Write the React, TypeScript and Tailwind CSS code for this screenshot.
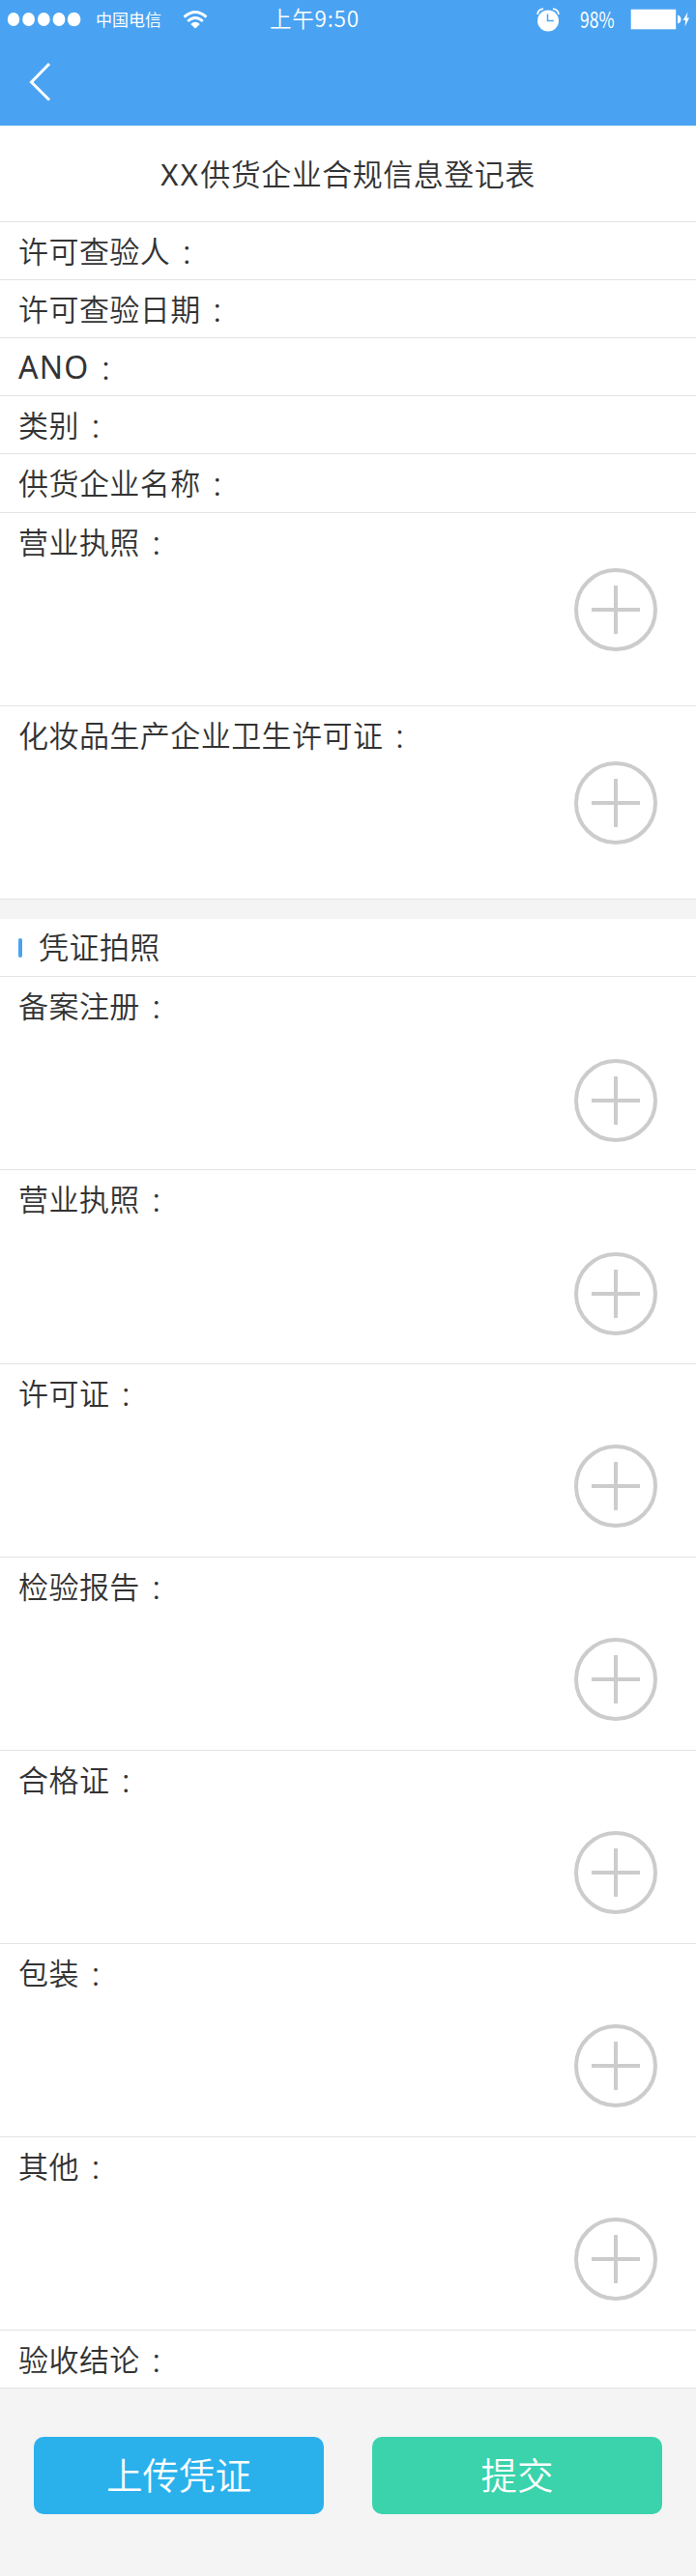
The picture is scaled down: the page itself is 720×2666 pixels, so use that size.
const CJK = "font-['Noto_Sans','Noto_Sans_CJK_SC',sans-serif]";

function Plus() {
  return (
    <svg width="86" height="86" viewBox="0 0 86 86" fill="none" stroke="#cccccc" strokeWidth="4" className="block shrink-0">
      <circle cx="43" cy="43" r="41" />
      <path d="M43 18V68M18 43H68" />
    </svg>
  );
}

function Label({ children, latin }: { children: string; latin?: boolean }) {
  return (
    <span className="flex h-[59px] items-center pt-[2px] text-[31px] font-[350] leading-[57px] tracking-[0.45px] whitespace-nowrap">
      <span className={latin ? "pb-[2px] text-[32px] font-normal leading-[55px] tracking-[1.2px]" : ""}>{children}</span>
      <span className="pt-[2px] pl-[10px] text-[28px] font-light leading-[55px] font-['Noto_Sans_CJK_SC',sans-serif]">：</span>
    </span>
  );
}

function Field({ label, tall, latin }: { label: string; tall?: boolean; latin?: boolean }) {
  return (
    <div className={tall ? "h-[61px] border-b border-[#e3e3e3] pl-[19px]" : "h-[60px] border-b border-[#e3e3e3] pl-[19px]"}>
      <Label latin={latin}>{label}</Label>
    </div>
  );
}

function Photo({ label, iconClass, tall }: { label: string; iconClass: string; tall?: boolean }) {
  return (
    <div className={`flex items-start justify-between border-b border-[#e3e3e3] pl-[19px] pr-10 ${tall ? "h-[201px]" : "h-[200px]"}`}>
      <Label>{label}</Label>
      <div className={iconClass}>
        <Plus />
      </div>
    </div>
  );
}

function StatusBar() {
  return (
    <div className="flex h-10 items-center text-white font-['Noto_Sans_CJK_SC',sans-serif]">
      <svg width="84" height="40" viewBox="0 0 84 40" fill="#fff" className="shrink-0">
        <ellipse cx="14" cy="20" rx="6.2" ry="7" />
        <ellipse cx="29.6" cy="20" rx="6.4" ry="7" />
        <ellipse cx="45.3" cy="20" rx="6.4" ry="7" />
        <ellipse cx="61" cy="20" rx="6.4" ry="7" />
        <ellipse cx="76.6" cy="20" rx="6.8" ry="7.3" />
      </svg>
      <span className="ml-[15px] w-[90px] text-[17px] leading-10 whitespace-nowrap">中国电信</span>
      <svg width="26" height="20" viewBox="0 0 26 20" fill="none" stroke="#fff" strokeWidth="2.8" className="shrink-0">
        <path d="M1.5 7.6Q13 -2.6 24.5 7.6" />
        <path d="M5.2 12Q13 5 20.8 12" />
        <path d="M8.2 15Q13 10.6 17.8 15L13 19.4Z" fill="#fff" stroke="none" />
      </svg>
      <span className="ml-[64px] w-[96px] pb-[3px] text-[22.5px] font-[350] leading-[37px] tracking-[0.8px] whitespace-nowrap">上午9:50</span>
      <svg width="24" height="26" viewBox="0 0 24 26" className="ml-auto shrink-0">
        <circle cx="12" cy="14.5" r="11" fill="#fff" />
        <path d="M1.200 8Q1.200 3 7 2.200M22.800 8Q22.800 3 17 2.200" stroke="#fff" strokeWidth="1.800" fill="none" />
        <path d="M11.500 7.500V14.500H17.800" stroke="#49a3f2" strokeWidth="1.500" fill="none" />
      </svg>
      <span className="ml-[21px] w-[52px] origin-left scale-x-[0.76] pb-[2px] text-[23px] leading-[38px] whitespace-nowrap">98%</span>
      <svg width="68" height="22" viewBox="0 0 68 22" fill="#fff" className="shrink-0">
        <rect x="0.7" y="0.7" width="46.500" height="20.600" />
        <path d="M49 6.500Q52.500 7.500 52.500 11T49 15.500Z" />
        <path d="M59.500 3.500L54.500 12H57.200L56.500 18.500L61 9.500H58.500Z" />
      </svg>
    </div>
  );
}

const CREDENTIALS = [
  { label: "备案注册", tall: false, iconClass: "mt-[85px]" },
  { label: "营业执照", tall: true, iconClass: "mt-[85px]" },
  { label: "许可证", tall: false, iconClass: "mt-[83px]" },
  { label: "检验报告", tall: false, iconClass: "mt-[83px]" },
  { label: "合格证", tall: false, iconClass: "mt-[83px]" },
  { label: "包装", tall: false, iconClass: "mt-[83px]" },
  { label: "其他", tall: false, iconClass: "mt-[83px]" },
];

export default function App() {
  return (
    <div className={`flex h-[2666px] w-[720px] flex-col bg-[#f4f4f4] text-[#333333] ${CJK}`}>
      <header className="h-[130px] bg-[#49a3f2]">
        <StatusBar />
        <svg width="24" height="42" viewBox="0 0 24 42" fill="none" stroke="#fff" strokeWidth="3" className="mt-6 ml-[30px] block">
          <path d="M21 2L2.500 21L21 39.500" />
        </svg>
      </header>
      <main className="bg-white">
        <h1 className="flex h-[100px] items-center justify-center border-b border-[#e3e3e3] pt-[2px] text-[31px] font-[350] tracking-[0.5px]">
          <span>
            <span className="font-normal tracking-[2.4px]">XX</span>供货企业合规信息登记表
          </span>
        </h1>
        <Field label="许可查验人" />
        <Field label="许可查验日期" />
        <Field label="ANO" latin />
        <Field label="类别" />
        <Field label="供货企业名称" tall />
        <Photo label="营业执照" iconClass="mt-[57px]" />
        <Photo label="化妆品生产企业卫生许可证" iconClass="mt-[57px]" />
      </main>
      <div className="h-5 bg-[#f4f4f4]" />
      <section className="bg-white">
        <h2 className="flex h-[60px] items-center border-b border-[#e3e3e3] pl-[19px] text-[31px] font-[350] tracking-[0.45px]">
          <span className="mr-[17px] h-5 w-1 rounded-[2px] bg-[#49a3f2]" />
          凭证拍照
        </h2>
        {CREDENTIALS.map((c) => (
          <Photo key={c.label} label={c.label} tall={c.tall} iconClass={c.iconClass} />
        ))}
        <Field label="验收结论" />
      </section>
      <footer className="flex justify-between px-[35px] pt-[50px]">
        <button className="h-20 w-[300px] rounded-[10px] bg-[#2ab1ec] text-[37.5px] font-[350] text-white">上传凭证</button>
        <button className="h-20 w-[300px] rounded-[10px] bg-[#3ad3ab] text-[37.5px] font-[350] text-white">提交</button>
      </footer>
    </div>
  );
}
